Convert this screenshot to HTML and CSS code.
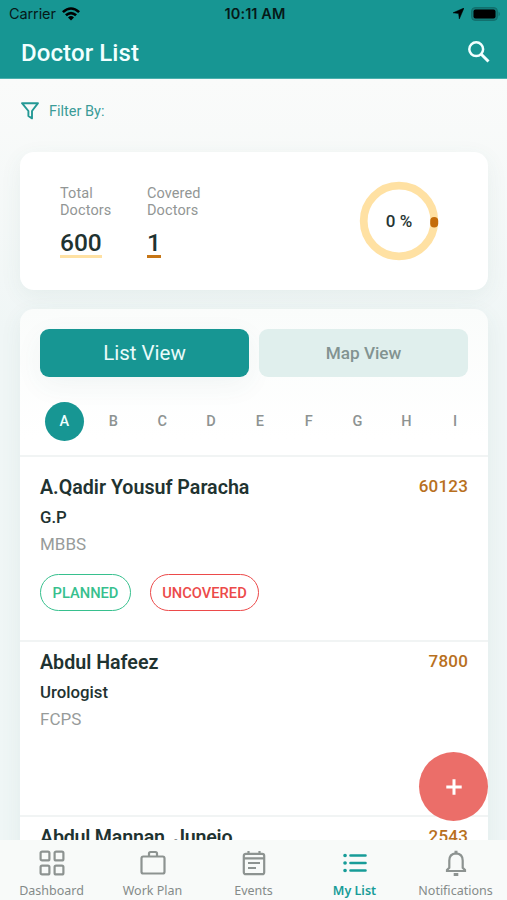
FILE: index.html
```html
<!DOCTYPE html>
<html lang="en">
<head>
<meta charset="utf-8">
<title>Doctor List</title>
<link rel="stylesheet" href="styles.css">
</head>
<body>
<div class="app">
  <header class="header">
    <div class="status">
      <div class="carrier"><span>Carrier</span>
        <svg width="18" height="14" viewBox="0 0 18 14"><path d="M0 4.2Q9-3.8 18 4.2L16.2 6.1Q9-.4 1.8 6.1Z"/><path d="M3 7.3Q9 2 15 7.3L13.2 9.2Q9 5.6 4.8 9.2Z"/><path d="M6 10.4Q9 7.8 12 10.4L9 13.4Z"/></svg>
      </div>
      <div class="time">10:11 AM</div>
      <div class="power">
        <svg width="11" height="11" viewBox="0 0 11 11"><path d="M11 0 6.3 11 5.6 5.5 0 4.8Z" stroke="#000" stroke-width=".5"/></svg>
        <svg width="30" height="14" viewBox="0 0 30 14"><rect x=".6" y=".6" width="25.800" height="12.800" rx="3.500" fill="#137b79" stroke="#126e6c"/><rect x="2.500" y="2.500" width="22" height="9" rx="2"/><path d="M27.600 4.500Q30 7 27.600 9.500Z" fill="#126e6c"/></svg>
      </div>
    </div>
    <div class="titlebar">
      <h1>Doctor List</h1>
      <svg width="22" height="22" viewBox="0 0 22 22" fill="none" stroke="#f2ffff" stroke-width="2.500"><circle cx="8.200" cy="8.200" r="6.900"/><path d="m13 13 7.500 7.500" stroke-width="3"/></svg>
    </div>
  </header>

  <main class="content">
    <div class="filter">
      <svg width="18" height="18" viewBox="0 0 18 18" fill="none" stroke="#259995" stroke-width="1.900" stroke-linejoin="round"><path d="M1 1.200H17L11 9V16.400L7.400 14V9Z"/></svg>
      <span>Filter By:</span>
    </div>

    <section class="card summary">
      <div class="stat total"><p>Total<br>Doctors</p><strong>600</strong></div>
      <div class="stat covered"><p>Covered<br>Doctors</p><strong>1</strong></div>
      <svg class="ring" width="80" height="80" viewBox="0 0 80 80"><circle cx="40" cy="40" r="35.300" fill="none" stroke="#ffe1a3" stroke-width="7.800"/><rect x="71.200" y="36" width="8" height="10.500" rx="4" fill="#c46c0a"/><text x="40" y="46" text-anchor="middle">0 %</text></svg>
    </section>

    <section class="card doctors">
      <div class="views"><button class="view active">List View</button><button class="view">Map View</button></div>
      <nav class="letters"><b class="selected">A</b><b>B</b><b>C</b><b>D</b><b>E</b><b>F</b><b>G</b><b>H</b><b>I</b></nav>
      <article class="doctor first">
        <div class="row"><h2>A.Qadir Yousuf Paracha</h2><span class="code">60123</span></div>
        <p class="field">G.P</p><p class="degree">MBBS</p>
        <div class="tags"><span class="tag planned">PLANNED</span><span class="tag uncovered">UNCOVERED</span></div>
      </article>
      <article class="doctor">
        <div class="row"><h2>Abdul Hafeez</h2><span class="code">7800</span></div>
        <p class="field">Urologist</p><p class="degree">FCPS</p>
      </article>
      <article class="doctor">
        <div class="row"><h2 class="tight">Abdul Mannan&nbsp; Junejo</h2><span class="code">2543</span></div>
      </article>
    </section>
  </main>

  <button class="add" aria-label="Add"><svg width="16" height="16" viewBox="0 0 16 16" stroke="#fff" stroke-width="3"><path d="M8 .3V15.700M.3 8H15.700"/></svg></button>

  <nav class="tabs">
    <div class="tab">
      <svg width="26" height="26" viewBox="0 0 26 26"><rect x="1.600" y="1.600" width="8.800" height="8.800" rx="1.500"/><rect x="15.600" y="1.600" width="8.800" height="8.800" rx="1.500"/><rect x="1.600" y="15.600" width="8.800" height="8.800" rx="1.500"/><rect x="15.600" y="15.600" width="8.800" height="8.800" rx="1.500"/></svg>
      <span>Dashboard</span>
    </div>
    <div class="tab">
      <svg width="26" height="26" viewBox="0 0 26 26"><rect x="1.500" y="6.500" width="23" height="17" rx="1.800"/><path d="M9 6.500V3.500Q9 2 10.500 2H15.500Q17 2 17 3.500V6.500"/></svg>
      <span>Work Plan</span>
    </div>
    <div class="tab">
      <svg width="26" height="26" viewBox="0 0 26 26"><rect x="2.800" y="3.800" width="20.400" height="20.400" rx="2"/><path d="M3 8.300H23M7.500 1V4M18.500 1V4M7 13H19M7 18H15"/></svg>
      <span>Events</span>
    </div>
    <div class="tab current">
      <svg width="26" height="26" viewBox="0 0 26 26" stroke-linecap="round"><path d="M8.500 5.500H23.500M8.500 13H23.500M8.500 20.500H23.500"/><path d="M3 5.500H3.100M3 13H3.100M3 20.500H3.100" stroke-width="3.600"/></svg>
      <span>My List</span>
    </div>
    <div class="tab">
      <svg width="26" height="26" viewBox="0 0 26 26"><path d="M4 21V20L6.300 17.700V10.500Q6.300 3.800 13 3.300Q19.700 3.800 19.700 10.500V17.700L22 20V21Z"/><path d="M13 .7V3.500M10.700 24.500H15.300" stroke-width="3"/></svg>
      <span>Notifications</span>
    </div>
  </nav>
</div>
</body>
</html>
```

FILE: styles.css
```css
* { box-sizing: border-box; }
body, h1, h2, p { margin: 0; }
body { font-family: Roboto, sans-serif; color: #1f3331; }
button { border: 0; font-family: inherit; padding: 0; }
svg { display: block; flex: none; }

.app { position: relative; display: flex; flex-direction: column; height: 900px; overflow: hidden; background: linear-gradient(#fafbfa 80px, #f0f6f6 330px, #eff6f6); }

.header { height: 79px; flex: none; background: #179693; border-bottom: 1px solid #4bb0ad; }
.status { display: grid; grid-template-columns: 1fr auto 1fr; align-items: center; height: 27px; padding: 0 6px 0 9px; color: #061918; font: 14.5px/27px Inter, sans-serif; }
.carrier { display: flex; align-items: center; gap: 6px; letter-spacing: -.1px; }
.time { font-weight: 600; letter-spacing: .1px; }
.power { display: flex; justify-content: flex-end; align-items: center; gap: 7px; }
.titlebar { display: flex; justify-content: space-between; align-items: center; height: 50px; padding: 0 17px 0 21px; }
h1 { font-size: 24px; line-height: 28px; font-weight: 500; letter-spacing: .1px; color: #f2ffff; padding-top: 1px; }

.content { flex: 1; min-height: 0; overflow: hidden; padding: 0 19px 0 20px; }
.filter { display: flex; align-items: center; gap: 10px; height: 73px; padding: 0 0 9px 1px; font-size: 14.500px; color: #3a9c98; }
.card { background: #fff; border-radius: 14px; box-shadow: 0 6px 22px rgba(50, 110, 105, .07); }

.summary { display: flex; align-items: center; height: 138px; padding: 0 49px 0 40px; }
.stat { width: 87px; height: 74px; align-self: flex-start; margin-top: 33px; }
.stat p { font-size: 14.500px; line-height: 17px; letter-spacing: .1px; color: #929695; }
.stat strong { display: inline-block; margin-top: 9px; font-size: 24.500px; line-height: 29px; height: 30px; font-weight: 500; border-bottom: 3px solid #ffe1a3; }
.stat.covered strong { border-color: #c67616; }
.ring { margin-left: auto; }
.ring text { font: 500 17px Roboto, sans-serif; fill: #263533; }

.doctors { margin-top: 19px; height: 700px; background: linear-gradient(#fafcfb, #fff 130px); }
.views { display: flex; gap: 10px; padding: 20px 20px 0; }
.view { flex: 1; height: 48px; border-radius: 9px; background: #e0efed; color: #829391; font-size: 17.200px; font-weight: 500; }
.view.active { background: #179693; color: #e9fbfa; font-size: 20.500px; font-weight: 400; box-shadow: 0 8px 28px rgba(50, 110, 105, .06); }
.letters { display: grid; grid-template-columns: repeat(9, 48.850px); height: 80px; align-items: center; padding: 10px 0 0 20px; overflow: hidden; border-bottom: 2px solid #f1f4f4; }
.letters b { justify-self: center; width: 39px; text-align: center; font-size: 14.500px; line-height: 39px; font-weight: 500; color: #8d9392; }
.letters .selected { border-radius: 50%; background: #179693; color: #effffe; }

.doctor { height: 175px; padding: 9px 20px 0; border-bottom: 2px solid #f1f4f4; }
.doctor.first { height: 185px; padding-top: 19px; }
.row { display: flex; justify-content: space-between; }
h2 { font-size: 19.650px; line-height: 24px; font-weight: 600; }
.tight { letter-spacing: -.22px; }
.code { font-size: 17px; line-height: 21px; font-weight: 500; letter-spacing: .2px; color: #b8701e; }
.field { margin-top: 7px; font-size: 16.800px; line-height: 20px; font-weight: 500; }
.degree { margin-top: 7px; font-size: 17px; line-height: 20px; color: #979b9a; }
.tags { display: flex; gap: 19px; margin-top: 20px; }
.tag { display: flex; align-items: center; justify-content: center; height: 37px; border: 1.500px solid; border-radius: 19px; font-size: 14.700px; font-weight: 500; }
.planned { width: 91px; color: #37c08e; }
.uncovered { width: 109px; color: #ec4a4a; }

.add { position: absolute; right: 19px; bottom: 79px; display: grid; place-items: center; width: 69px; height: 69px; border-radius: 50%; background: #eb6e69; }

.tabs { display: grid; grid-template-columns: repeat(5, 101px); flex: none; height: 60px; padding: 10px 0 0 1px; background: #f8faf9; font: 12.500px/17px "Noto Sans", sans-serif; color: #858b89; }
.tab { display: flex; flex-direction: column; align-items: center; gap: 6px; white-space: nowrap; }
.tab svg { fill: none; stroke: #8d9391; stroke-width: 2.200; }
.tab.current { color: #179c98; font-weight: 600; }
.tab.current svg { stroke: #179c98; stroke-width: 2.600; }
```
